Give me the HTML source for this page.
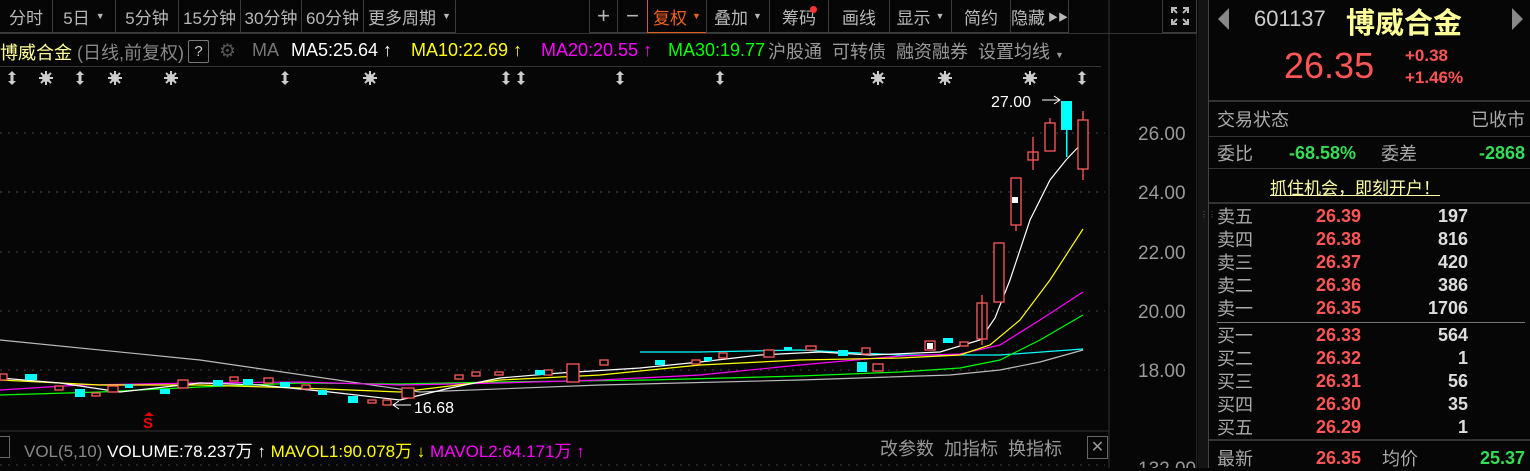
<!DOCTYPE html>
<html><head><meta charset="utf-8"><style>
*{margin:0;padding:0;box-sizing:border-box}
body{width:1530px;height:468px;background:#060606;overflow:hidden;position:relative;font-family:"Liberation Sans","Noto Sans CJK SC",sans-serif;color:#aaa}
.a{position:absolute;white-space:nowrap}
.tb{position:absolute;top:0;height:33px;border:1px solid #3c3c3c;border-top:none;font-size:17px;color:#b8b8b8;display:flex;align-items:center;justify-content:center}
.r{font-size:18px}
.lab{position:absolute;left:1217px;font-size:18px;color:#aaa;margin-top:-3px}
.pr{position:absolute;left:1316px;font-size:18px;font-weight:bold;color:#ff5555}
.vo{position:absolute;width:80px;left:1388px;text-align:right;font-size:18px;font-weight:bold;color:#ddd}
.cj{margin-top:-3px}
</style></head><body>
<!-- toolbar -->
<div class="tb" style="left:-1px;width:54px">分时</div>
<div class="tb" style="left:52px;width:64px">5日 <span style="font-size:9px;margin-left:6px">▼</span></div>
<div class="tb" style="left:115px;width:64px">5分钟</div>
<div class="tb" style="left:178px;width:63px">15分钟</div>
<div class="tb" style="left:240px;width:62px">30分钟</div>
<div class="tb" style="left:301px;width:63px">60分钟</div>
<div class="tb" style="left:363px;width:93px">更多周期 <span style="font-size:9px;margin-left:6px">▼</span></div>
<div class="tb" style="left:589px;width:29px;font-size:22px">+</div>
<div class="tb" style="left:617px;width:31px;font-size:22px">−</div>
<div class="tb" style="left:647px;width:60px;color:#f06020;border:1px solid #e05a18;border-top:none">复权 <span style="font-size:9px;margin-left:5px">▼</span></div>
<div class="tb" style="left:706px;width:64px">叠加 <span style="font-size:9px;margin-left:5px">▼</span></div>
<div class="tb" style="left:769px;width:60px">筹码<span style="position:absolute;left:40px;top:6px;width:7px;height:7px;border-radius:50%;background:#f33"></span></div>
<div class="tb" style="left:828px;width:62px">画线</div>
<div class="tb" style="left:889px;width:63px">显示 <span style="font-size:9px;margin-left:5px">▼</span></div>
<div class="tb" style="left:951px;width:60px">简约</div>
<div class="tb" style="left:1010px;width:59px">隐藏 <span style="font-size:10px;margin-left:3px">▶▶</span></div>
<div class="tb" style="left:1162px;width:35px"><svg width="20" height="20" viewBox="0 0 20 20" stroke="#bbb" stroke-width="2" fill="none"><path d="M2 7V2h5M2 2l5 5M13 2h5v5M18 2l-5 5M2 13v5h5M2 18l5-5M18 13v5h-5M18 18l-5-5"/></svg></div>
<div class="a" style="left:0;top:33px;width:1197px;height:1px;background:#333"></div>
<!-- row 2 -->
<div class="a" style="left:0;top:39px;font-size:18px"><span style="color:#ffff99">博威合金</span> <span style="color:#888">(日线,前复权)</span></div>
<div class="a" style="left:188px;top:40px;width:21px;height:23px;border:1px solid #777;color:#ccc;font-size:15px;text-align:center;line-height:21px;border-radius:2px">?</div>
<div class="a" style="left:219px;top:40px;font-size:19px;color:#555">⚙</div>
<div class="a" style="left:252px;top:40px;font-size:18px;color:#777">MA</div>
<div class="a" style="left:291px;top:40px;font-size:18px;color:#fff">MA5:25.64 ↑</div>
<div class="a" style="left:411px;top:40px;font-size:18px;color:#ff0">MA10:22.69 ↑</div>
<div class="a" style="left:541px;top:40px;font-size:18px;color:#f0f">MA20:20.55 ↑</div>
<div class="a" style="left:668px;top:40px;font-size:18px;color:#0f0">MA30:19.77</div>
<div class="a" style="left:768px;top:38px;font-size:18px;color:#999">沪股通 &nbsp;可转债 &nbsp;融资融券 &nbsp;设置均线 <span style="font-size:9px">▼</span></div>
<div class="a" style="left:0;top:66px;width:1101px;height:1px;background:#333"></div>
<!-- chart svg -->
<svg class="a" style="left:0;top:0" width="1197" height="468">
<defs>
<g id="ud"><path d="M0 -7l-4 4h2.5v6h-2.5l4 4 4-4h-2.5v-6h2.5z" fill="#ccc"/></g>
<g id="st"><circle r="4" fill="#ccc"/><path d="M0 -7V7M-7 0H7M-5 -5L5 5M-5 5L5 -5" stroke="#ccc" stroke-width="2"/></g>
</defs>
<use href="#ud" x="12" y="78"/><use href="#st" x="46" y="78"/><use href="#ud" x="80" y="78"/><use href="#st" x="115" y="78"/><use href="#st" x="171" y="78"/><use href="#ud" x="285" y="78"/><use href="#st" x="370" y="78"/><use href="#ud" x="506" y="78"/><use href="#ud" x="521" y="78"/><use href="#ud" x="620" y="78"/><use href="#ud" x="720" y="78"/><use href="#st" x="878" y="78"/><use href="#st" x="945" y="78"/><use href="#st" x="1030" y="78"/><use href="#ud" x="1082" y="78"/>
<g stroke="#444" stroke-dasharray="2,6"><line x1="0" y1="133" x2="1105" y2="133"/><line x1="0" y1="192" x2="1105" y2="192"/><line x1="0" y1="252" x2="1105" y2="252"/><line x1="0" y1="311" x2="1105" y2="311"/><line x1="0" y1="370" x2="1105" y2="370"/><line x1="0" y1="465" x2="1105" y2="465"/></g>
<line x1="1109" y1="0" x2="1109" y2="468" stroke="#333"/>
<line x1="1197" y1="0" x2="1197" y2="468" stroke="#444"/>
<g fill="#999" font-size="19"><text x="1138" y="140">26.00</text><text x="1138" y="199">24.00</text><text x="1138" y="259">22.00</text><text x="1138" y="318">20.00</text><text x="1138" y="377">18.00</text><text x="1138" y="475">132.00</text></g>
<g fill="none" stroke-width="1.2">
<polyline stroke="#bbb" points="0,340 200,360 420,392 600,385 800,380 950,375 1000,370 1040,362 1083,350"/>
<polyline stroke="#0ff" points="640,352 700,352 800,350 900,355 1000,355 1083,349"/>
<polyline stroke="#0f0" points="0,395 100,392 200,387 300,383 400,384 500,382 650,380 800,376 900,372 960,368 1000,360 1040,340 1083,315"/>
<polyline stroke="#f0f" points="0,390 80,385 200,383 300,382 400,385 500,383 600,380 700,375 800,365 900,356 960,354 1000,345 1040,320 1083,292"/>
<polyline stroke="#ff0" points="0,380 100,385 200,385 300,388 400,392 500,380 600,375 700,365 800,360 900,358 960,355 990,345 1020,320 1050,280 1083,229"/>
<polyline stroke="#fff" points="0,378 60,383 120,392 200,383 260,385 330,392 400,400 450,388 500,378 560,373 640,368 700,362 760,355 820,352 870,355 940,352 980,340 995,318 1010,280 1030,220 1050,180 1066,160 1083,142"/>
</g>
<g stroke="#ff5a5a" fill="#060606" stroke-width="1.3">
<rect x="1078" y="120" width="10" height="49"/><line x1="1083" y1="111" x2="1083" y2="120"/><line x1="1083" y1="169" x2="1083" y2="180"/>
<rect x="1045" y="123" width="10" height="28"/><line x1="1050" y1="118" x2="1050" y2="123"/>
<rect x="1028" y="152" width="10" height="8"/><line x1="1033" y1="137" x2="1033" y2="170"/>
<rect x="1011" y="178" width="10" height="47"/><line x1="1016" y1="225" x2="1016" y2="231"/>
<rect x="994" y="243" width="10" height="59"/>
<rect x="977" y="303" width="10" height="36"/><line x1="982" y1="295" x2="982" y2="345"/>
<rect x="960" y="342" width="8" height="4"/><rect x="925" y="341" width="10" height="9"/>
<rect x="873" y="364" width="10" height="7"/><rect x="862" y="348" width="8" height="6"/>
<rect x="806" y="346" width="10" height="4"/><rect x="764" y="350" width="10" height="7"/><rect x="719" y="353" width="8" height="5"/>
<rect x="692" y="360" width="8" height="4"/><rect x="600" y="360" width="8" height="5"/><rect x="567" y="364" width="12" height="18"/>
<rect x="544" y="370" width="8" height="5"/><rect x="495" y="372" width="8" height="3"/><rect x="472" y="372" width="8" height="4"/>
<rect x="455" y="375" width="8" height="4"/><rect x="402" y="388" width="12" height="10"/><rect x="383" y="400" width="8" height="5"/>
<rect x="368" y="400" width="8" height="3"/><rect x="302" y="385" width="8" height="4"/><rect x="264" y="378" width="9" height="5"/>
<rect x="230" y="377" width="8" height="4"/><rect x="178" y="380" width="10" height="8"/><rect x="108" y="386" width="10" height="6"/>
<rect x="55" y="386" width="8" height="4"/><rect x="0" y="374" width="7" height="6"/><rect x="92" y="393" width="8" height="3"/>
</g>
<g fill="#0ff">
<rect x="1061" y="101" width="11" height="29"/><rect x="1066" y="130" width="1.5" height="27"/>
<rect x="943" y="338" width="10" height="5"/><rect x="857" y="362" width="10" height="10"/><rect x="838" y="350" width="10" height="6"/>
<rect x="784" y="347" width="8" height="3"/><rect x="704" y="357" width="8" height="4"/><rect x="655" y="360" width="10" height="5"/>
<rect x="535" y="370" width="10" height="5"/><rect x="348" y="396" width="10" height="7"/><rect x="318" y="390" width="9" height="5"/>
<rect x="280" y="382" width="10" height="5"/><rect x="243" y="379" width="10" height="6"/><rect x="213" y="380" width="10" height="6"/>
<rect x="160" y="389" width="10" height="5"/><rect x="75" y="389" width="10" height="8"/><rect x="25" y="374" width="12" height="6"/><rect x="125" y="384" width="8" height="4"/>
</g>
<rect x="1012" y="197" width="6" height="6" fill="#fff"/><rect x="927" y="343" width="6" height="6" fill="#fff"/>
<text x="991" y="107" fill="#fff" font-size="16">27.00</text><path d="M1042 100H1060M1054 96l6 4-6 4" stroke="#fff" fill="none"/>
<text x="414" y="413" fill="#fff" font-size="16">16.68</text><path d="M411 405H393M399 401l-6 4 6 4" stroke="#fff" fill="none"/>
<text x="143" y="428" fill="#e00" font-size="15" font-weight="bold">S</text><path d="M144 416l5-4 5 4z" fill="#e00"/>
<line x1="0" y1="431" x2="1109" y2="431" stroke="#333"/>
</svg>
<!-- vol row -->
<div class="a" style="left:-6px;top:436px;width:16px;height:22px;border:1px solid #666"></div>
<div class="a" style="left:24px;top:437px;font-size:17px;color:#888">VOL(5,10) <span style="color:#fff">VOLUME:78.237万 ↑</span> <span style="color:#ff0">MAVOL1:90.078万 ↓</span> <span style="color:#f0f">MAVOL2:64.171万 ↑</span></div>
<div class="a" style="left:880px;top:435px;font-size:18px;color:#999">改参数 &nbsp;加指标 &nbsp;换指标</div>
<div class="a" style="left:1087px;top:436px;width:21px;height:23px;border:1px solid #666;color:#999;text-align:center;line-height:21px;font-size:16px">✕</div>
<!-- right panel -->
<div class="a" style="left:1198px;top:0;width:11px;height:468px;background:#141414;border-right:1px solid #444"></div>
<div class="a" style="left:1200px;top:213px;color:#666;font-size:8px;line-height:4px">⋮⋮</div>
<div class="a" style="left:1218px;top:8px;width:0;height:0;border-top:11px solid transparent;border-bottom:11px solid transparent;border-right:11px solid #888"></div>
<div class="a" style="left:1512px;top:8px;width:0;height:0;border-top:11px solid transparent;border-bottom:11px solid transparent;border-left:11px solid #888"></div>
<div class="a" style="left:1254px;top:6px;font-size:22px;color:#ccc">601137</div>
<div class="a" style="left:1346px;top:0px;font-size:29px;font-weight:bold;color:#ffff99">博威合金</div>
<div class="a" style="left:1284px;top:45px;font-size:36px;color:#ff5555">26.35</div>
<div class="a" style="left:1405px;top:45px;font-size:17px;font-weight:bold;color:#ff5555;line-height:22px">+0.38<br>+1.46%</div>
<div class="a" style="left:1209px;top:100px;width:321px;height:2px;background:#333"></div>
<div class="lab" style="top:109px">交易状态</div><div class="a r cj" style="right:5px;top:109px;color:#aaa">已收市</div>
<div class="a" style="left:1209px;top:136px;width:321px;height:1px;background:#333"></div>
<div class="lab" style="top:143px">委比</div><div class="a" style="left:1289px;top:143px;font-size:18px;font-weight:bold;color:#33dd55">-68.58%</div>
<div class="a r cj" style="left:1381px;top:143px">委差</div><div class="a" style="right:5px;top:143px;font-size:18px;font-weight:bold;color:#33dd55">-2868</div>
<div class="a" style="left:1209px;top:168px;width:321px;height:1px;background:#333"></div>
<div class="a" style="left:1270px;top:174px;font-size:17px;color:#ffffaa;text-decoration:underline">抓住机会，即刻开户！</div>
<div class="a" style="left:1209px;top:202px;width:321px;height:2px;background:#333"></div>
<div class="lab" style="top:206px">卖五</div><div class="pr" style="top:206px">26.39</div><div class="vo" style="top:206px">197</div>
<div class="lab" style="top:229px">卖四</div><div class="pr" style="top:229px">26.38</div><div class="vo" style="top:229px">816</div>
<div class="lab" style="top:252px">卖三</div><div class="pr" style="top:252px">26.37</div><div class="vo" style="top:252px">420</div>
<div class="lab" style="top:275px">卖二</div><div class="pr" style="top:275px">26.36</div><div class="vo" style="top:275px">386</div>
<div class="lab" style="top:298px">卖一</div><div class="pr" style="top:298px">26.35</div><div class="vo" style="top:298px">1706</div>
<div class="a" style="left:1217px;top:322px;width:308px;height:1px;background:#777"></div>
<div class="lab" style="top:325px">买一</div><div class="pr" style="top:325px">26.33</div><div class="vo" style="top:325px">564</div>
<div class="lab" style="top:348px">买二</div><div class="pr" style="top:348px">26.32</div><div class="vo" style="top:348px">1</div>
<div class="lab" style="top:371px">买三</div><div class="pr" style="top:371px">26.31</div><div class="vo" style="top:371px">56</div>
<div class="lab" style="top:394px">买四</div><div class="pr" style="top:394px">26.30</div><div class="vo" style="top:394px">35</div>
<div class="lab" style="top:417px">买五</div><div class="pr" style="top:417px">26.29</div><div class="vo" style="top:417px">1</div>
<div class="a" style="left:1209px;top:439px;width:321px;height:2px;background:#333"></div>
<div class="lab" style="top:448px">最新</div><div class="pr" style="top:448px">26.35</div>
<div class="a r cj" style="left:1382px;top:448px">均价</div><div class="a" style="right:5px;top:448px;font-size:18px;font-weight:bold;color:#33dd55">25.37</div>
</body></html>
